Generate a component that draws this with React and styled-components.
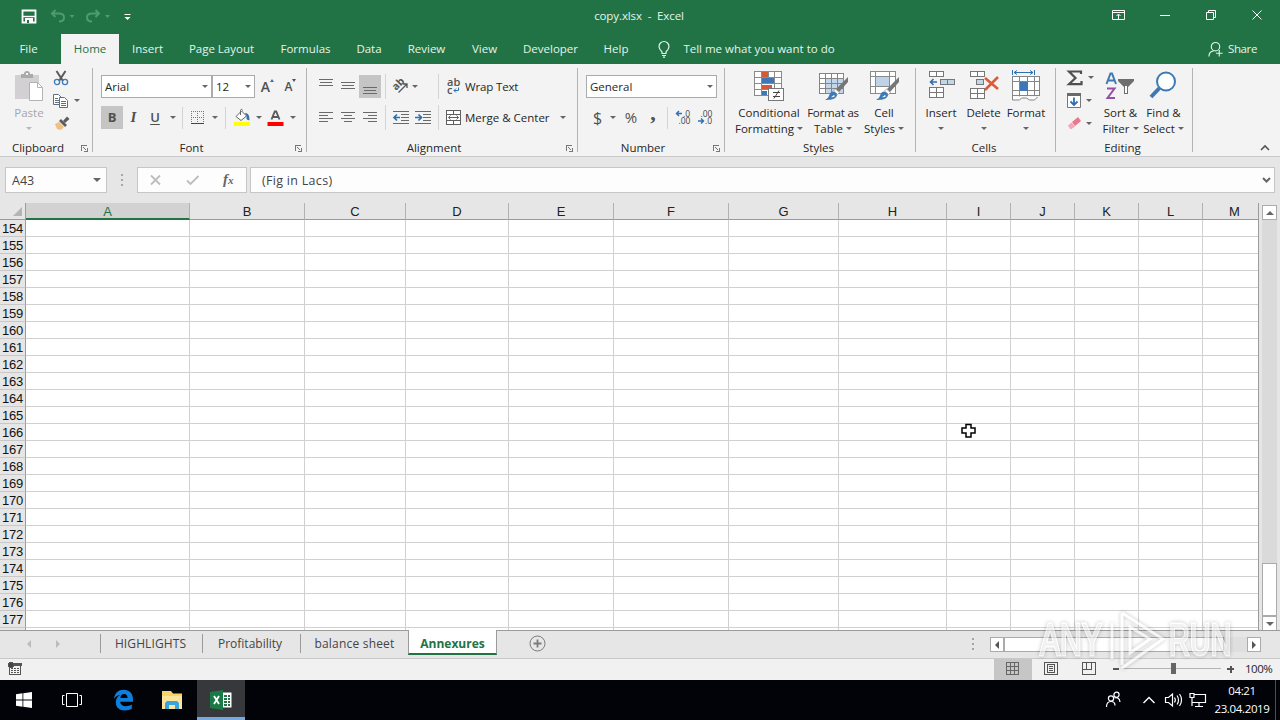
import React from "react";
import styled, { createGlobalStyle } from "styled-components";

const GlobalStyle = createGlobalStyle`
  * {
    box-sizing: border-box;
  }
  body {
    margin: 0;
    overflow: hidden;
    font-family: "Open Sans", "Noto Sans", sans-serif;
    font-size: 11.5px;
    color: #262626;
  }
  svg {
    display: block;
    flex: none;
    overflow: visible;
  }
`;

/* ---------- shared ---------- */

const Screen = styled.div`
  position: relative;
  display: flex;
  flex-direction: column;
  width: 1280px;
  height: 720px;
  overflow: hidden;
  background: #e6e6e6;
`;
const Cell = styled.div`
  display: flex;
  flex: none;
  align-items: center;
  justify-content: center;
  width: ${(p) => p.$w}px;
  height: ${(p) => (p.$h ? `${p.$h}px` : "100%")};
`;
const Spacer = styled.div`
  flex: ${(p) => (p.$w ? "none" : 1)};
  width: ${(p) => (p.$w ? `${p.$w}px` : "auto")};
`;
const Text = styled.span`
  white-space: pre;
  font-size: ${(p) => p.$size || 11.5}px;
  letter-spacing: ${(p) => p.$ls || 0}px;
`;
const CaretShape = styled.i`
  display: inline-block;
  flex: none;
  width: 0;
  height: 0;
  border: 3px solid transparent;
  border-top: 3px solid ${(p) => p.$color || "#666"};
  border-bottom: 0;
`;
const Caret = ({ w = 12, color }) => (
  <Cell $w={w}>
    <CaretShape $color={color} />
  </Cell>
);

/* ---------- title bar and tabs ---------- */

const TitleBar = styled.header`
  display: flex;
  flex: none;
  align-items: center;
  height: 34px;
  padding: 0 0 2px 20px;
  background: #217346;
  color: #e6f3eb;
`;
const FileName = styled.div`
  width: 100px;
  padding-bottom: 2px;
  text-align: center;
  white-space: pre;
  letter-spacing: -0.1px;
`;
const Tabs = styled.nav`
  display: flex;
  flex: none;
  height: 30px;
  background: #217346;
  color: #e6f3eb;
`;
const Tab = styled.div`
  display: flex;
  align-items: center;
  justify-content: center;
  width: ${(p) => p.$w}px;
  height: 30px;
  padding-bottom: 2px;
  letter-spacing: ${(p) => p.$ls || 0}px;
  white-space: nowrap;
  color: ${(p) => (p.$active ? "#217346" : "inherit")};
  background: ${(p) => (p.$active ? "#f3f3f3" : "transparent")};
`;

/* ---------- ribbon ---------- */

const RibbonBar = styled.section`
  display: flex;
  flex: none;
  height: 93px;
  padding-top: 4px;
  background: #f3f3f3;
  border-bottom: 1px solid #c9c9c9;
`;
const GroupBox = styled.div`
  display: flex;
  flex: none;
  flex-direction: column;
  width: ${(p) => p.$w}px;
`;
const GroupBody = styled.div`
  display: flex;
  height: 72px;
  padding-left: ${(p) => p.$pl || 0}px;
`;
const GroupLabel = styled.div`
  display: flex;
  align-items: center;
  height: 16px;
  padding-right: 1px;
`;
const GroupName = styled.div`
  flex: 1;
  padding: 0 2px 2px 0;
  text-align: center;
`;
const GroupLine = styled.div`
  flex: none;
  width: 1px;
  height: 84px;
  background: #b4b4b4;
`;
const Lines = styled.div`
  display: flex;
  flex-direction: column;
  gap: 8px;
  padding-top: 7px;
`;
const Line = styled.div`
  display: flex;
  align-items: center;
  height: 23px;
`;
const Stack = styled.div`
  display: flex;
  flex-direction: column;
  width: ${(p) => p.$w}px;
  margin-top: -2px;
`;
const StackLine = styled.div`
  display: flex;
  align-items: center;
  height: 23px;
`;
const Divider = styled.div`
  flex: none;
  width: 1px;
  height: ${(p) => p.$h || 22}px;
  margin: 0 3px;
  background: #d4d4d4;
`;
const Combo = styled.div`
  display: flex;
  align-items: center;
  justify-content: space-between;
  width: ${(p) => p.$w}px;
  height: 23px;
  padding-left: 3px;
  background: #fff;
  border: 1px solid #ababab;
`;
const Toggle = styled(Cell)`
  background: ${(p) => (p.$on ? "#c5c5c5" : "transparent")};
`;
const Glyph = styled.span`
  font-size: ${(p) => p.$size || 14}px;
  line-height: 1;
  font-weight: ${(p) => p.$weight || 700};
  font-style: ${(p) => (p.$italic ? "italic" : "normal")};
  font-family: ${(p) => (p.$serif ? '"Liberation Serif", serif' : "inherit")};
  text-decoration: ${(p) => (p.$under ? "underline" : "none")};
  text-underline-offset: 2px;
  padding-bottom: ${(p) => p.$raise || 0}px;
  color: #505050;
`;
const SizeMark = styled.i`
  align-self: flex-start;
  width: 0;
  height: 0;
  margin-top: 4px;
  border: 2.5px solid transparent;
  border-top: ${(p) => (p.$up ? 0 : "3px solid #505050")};
  border-bottom: ${(p) => (p.$up ? "3px solid #3f6fa5" : 0)};
`;
const BigButton = styled.div`
  display: flex;
  flex: none;
  flex-direction: column;
  align-items: center;
  width: ${(p) => p.$w}px;
  color: ${(p) => (p.$off ? "#a6a6a6" : "inherit")};
`;
const BigIcon = styled.div`
  display: flex;
  align-items: flex-start;
  height: 36px;
  padding-top: 3px;
`;
const BigLine = styled.div`
  display: flex;
  align-items: center;
  gap: 3px;
  height: 16px;
  white-space: nowrap;
  letter-spacing: ${(p) => p.$ls || 0}px;
`;

const Launcher = () => (
  <svg width="13" height="9" viewBox="0 0 13 9" fill="none" stroke="#777" shapeRendering="crispEdges">
    <path d="M3.5 7V1.5H9" />
    <path d="M5.5 3.5l3 3M9.5 4v4M6 7.5h4" />
  </svg>
);

function Group({ name, w, pl, launcher, children }) {
  return (
    <>
      <GroupBox $w={w}>
        <GroupBody $pl={pl}>{children}</GroupBody>
        <GroupLabel>
          <GroupName>{name}</GroupName>
          {launcher && <Launcher />}
        </GroupLabel>
      </GroupBox>
      <GroupLine />
    </>
  );
}

function Big({ w, icon, first, second, off, ls }) {
  return (
    <BigButton $w={w} $off={off}>
      <BigIcon>{icon}</BigIcon>
      <BigLine $ls={ls}>{first}</BigLine>
      <BigLine>
        {second}
        <CaretShape $color={off ? "#b8b8b8" : undefined} />
      </BigLine>
    </BigButton>
  );
}

/* ---------- icons ---------- */

const PasteIcon = () => (
  <svg width="28" height="31" viewBox="0 0 28 31">
    <path d="M0 4h24v24H0z" fill="#d3d0d3" />
    <path d="M6 3h3a3 3 0 0 1 6 0h3v4H6z" fill="#aaa" />
    <rect x="11" y="2" width="2" height="2" fill="#f3f3f3" />
    <path d="M14.500 11.500h8l5 5v13h-13z" fill="#fff" stroke="#b3b3b3" />
    <path d="M22.500 11.500v5h5" fill="none" stroke="#b3b3b3" />
  </svg>
);
const CutIcon = () => (
  <svg width="16" height="16" viewBox="0 0 16 16" fill="none">
    <path d="M3.5 1l6.5 10M12.500 1L6 11" stroke="#5a5a5a" strokeWidth="2" />
    <circle cx="4" cy="12" r="2.600" stroke="#3f7cb8" strokeWidth="1.300" />
    <circle cx="12" cy="12" r="2.600" stroke="#3f7cb8" strokeWidth="1.300" />
  </svg>
);
const CopyIcon = () => (
  <svg width="16" height="14" viewBox="0 0 16 14" fill="#fff" stroke="#5f6f80">
    <path d="M.5.5h5l3 3v7h-8z" />
    <path d="M2 4.500h3M2 6.500h4M2 8.500h4" />
    <path d="M6.500 3.500h5l3 3v7h-8z" />
    <path d="M8 7.500h5M8 9.500h5M8 11.500h5" />
  </svg>
);
const BrushIcon = () => (
  <svg width="16" height="15" viewBox="0 0 16 15">
    <path d="M1 8l4-2 5 5-3 3-4-1z" fill="#eec27c" />
    <path d="M5 5l2-2 6 6-2 2z" fill="#5c5c5c" />
    <path d="M9 5l4-4.500L15.500 3 11 7z" fill="#5c5c5c" />
  </svg>
);
const BordersIcon = () => (
  <svg width="14" height="14" viewBox="0 0 14 14" fill="none" stroke="#777" shapeRendering="crispEdges">
    <path d="M.5 0v13M6.500 0v13M12.500 0v13M0 .5h13M0 6.500h13" strokeDasharray="1 1" />
    <path d="M0 12.500h13" stroke="#444" />
  </svg>
);
const FillIcon = () => (
  <svg width="18" height="17" viewBox="0 0 18 17">
    <path d="M3 7.500L8.500 2l5 5L8 11.500z" fill="#fff" stroke="#666" />
    <path d="M7.500 6V1.500c0-1.500 2-1.500 2 0" fill="none" stroke="#666" />
    <path d="M12 4c3 0 4.500 2 4.500 7-1 .6-2.500 0-3-1.500L13.500 7z" fill="#3a6ea8" />
    <path d="M1 13h16v4H1z" fill="#ff0" />
  </svg>
);
const FontColorIcon = () => (
  <svg width="17" height="17" viewBox="0 0 17 17">
    <path d="M4.500 10.500L7.800 2.500h1.400l3.300 8M5.600 8h5.800" fill="none" stroke="#595959" strokeWidth="1.900" />
    <path d="M.5 13h16v4H.5z" fill="#f00" />
  </svg>
);
const Bars = ({ rows, top = 0 }) => (
  <svg width="14" height="17" viewBox="0 0 14 17" stroke="#6a6a6a" shapeRendering="crispEdges">
    {rows.map(([x, len], i) => (
      <path key={i} d={`M${x} ${top + i * 3 + 0.5}h${len}`} />
    ))}
  </svg>
);
const OrientIcon = () => (
  <svg width="18" height="17" viewBox="0 0 18 17" fill="none" stroke="#555">
    <text x="0" y="0" transform="translate(5 13) rotate(-45)" fontSize="10.500" fontWeight="700" fill="#555" stroke="none">
      ab
    </text>
    <path d="M7.500 14.500l8.500-8.500M12 6h4v4" strokeWidth="1.300" />
  </svg>
);
const IndentIcon = ({ right }) => (
  <svg width="16" height="14" viewBox="0 0 16 14" fill="none" stroke="#6a6a6a">
    <path d="M0 .5h16M8 3.500h8M8 6.500h8M8 9.500h8M0 12.500h16" shapeRendering="crispEdges" />
    <path d={right ? "M0 6.500h6M3.500 3.500l3 3-3 3" : "M1 6.500h6M4 3.500l-3 3 3 3"} stroke="#2f6fae" strokeWidth="1.700" />
  </svg>
);
const WrapIcon = () => (
  <svg width="14" height="17" viewBox="0 0 14 17">
    <text x="0" y="8" fontSize="11" fontWeight="600" fill="#555">
      ab
      <tspan x="0" y="16">c</tspan>
    </text>
    <path d="M11.500 9.500v3H7M9 10.500l-2 2 2 2" fill="none" stroke="#2f6fae" />
  </svg>
);
const MergeIcon = () => (
  <svg width="16" height="16" viewBox="0 0 16 16" fill="none" stroke="#5f5f5f">
    <path d="M.5.5h14v14H.5zM.5 4.500h14M.5 10.500h14M7.500 .5v4M7.500 10.500v4" fill="#fff" shapeRendering="crispEdges" />
    <path d="M2.500 7.500h10M4.500 5.500l-2 2 2 2M10.500 5.500l2 2-2 2" stroke="#2f6fae" />
  </svg>
);
const DecimalIcon = ({ more }) => (
  <svg width="16" height="15" viewBox="0 0 16 15" fontSize="8.500" fill="#444">
    <text x={more ? 8 : 3.5} y="6.500">
      {more ? ".0" : ".00"}
      <tspan x={more ? 3.5 : 8} y="14">{more ? ".00" : ".0"}</tspan>
    </text>
    <path d={more ? "M7 3.500H1.500M4 1L1.500 3.500 4 6" : "M1 11h5.500M4 8.500L6.500 11 4 13.500"} fill="none" stroke="#2f6fae" strokeWidth="1.400" />
  </svg>
);
const CondIcon = () => (
  <svg width="30" height="31" viewBox="0 0 30 31" fill="none" shapeRendering="crispEdges">
    <path d="M.5.500h27v24H.5z" fill="#fff" />
    <path d="M8 1h6v5H8zM8 14h10v5H8z" fill="#d45a35" />
    <path d="M8 7h12v6H8zM8 20h5v4H8z" fill="#3f76b5" />
    <path d="M.5.500h27v24H.5zM7.500 0v25M14.500 0v7M20.500 0v25M0 6.500h28M0 12.500h28M0 18.500h28" stroke="#8a8a8a" />
    <path d="M14.500 17.500h15v12h-15z" fill="#fff" stroke="#777" />
    <path d="M19 21.500h7M19 25.500h7" stroke="#444" />
    <path d="M25 19.500l-5 8" stroke="#444" shapeRendering="auto" />
  </svg>
);
const Brush = () => (
  <g transform="translate(0 1)">
    <path d="M29 5v5L20 20l-3-3z" fill="#767676" />
    <path d="M16.500 17l4 3.500-2 2-4-3.500z" fill="#fff" stroke="#888" strokeWidth=".7" />
    <path d="M13.500 19.500c3 .4 4.500 2 4.500 4-1.500 4-7 4.500-12 4.500 3-1.500 3.500-3 4.500-5.500.8-1.700 1.500-2.500 3-3z" fill="#3d7ab5" />
    <path d="M12 25c1-.2 2-1 2.500-2l1.500 1c-1 1-2 1.500-4 1z" fill="#fff" />
  </g>
);
const TableIcon = () => (
  <svg width="30" height="31" viewBox="-1 0 30 31">
    <g shapeRendering="crispEdges">
      <path d="M.5 2.500h24v20H.5z" fill="#fff" />
      <path d="M7 8h17v14H7z" fill="#c3d6eb" />
      <path d="M.5 2.500h24v20H.5zM6.500 2v20M12.500 2v20M18.500 2v20M0 7.500h25M0 12.500h25M0 17.500h25" fill="none" stroke="#858585" />
    </g>
    <Brush />
  </svg>
);
const CellStylesIcon = () => (
  <svg width="30" height="31" viewBox="-1 0 30 31">
    <g shapeRendering="crispEdges">
      <path d="M.5.500h25v22h-25z" fill="#fff" />
      <path d="M6 6h14v10H6z" fill="#bed3ea" />
      <path d="M.5.500h25v22h-25zM5.500 0v23M19.500 0v23M0 5.500h26M0 15.500h26" fill="none" stroke="#8a8a8a" />
    </g>
    <Brush />
  </svg>
);
const InsertIcon = () => (
  <svg width="28" height="31" viewBox="0 0 28 31" fill="#fff" stroke="#777" shapeRendering="crispEdges">
    <path d="M2.500.500h14v5h-14zM9.500 0v6" />
    <path d="M13.500 8.500h14v5h-14zM20.500 8v6" fill="#c3d6e4" />
    <path d="M2.500 16.500h14v10h-14zM2 21.500h15M9.500 16v11" />
    <path d="M10 11H4M6.500 8L3.500 11l3 3" fill="none" stroke="#2f6fae" strokeWidth="1.600" shapeRendering="auto" />
  </svg>
);
const DeleteIcon = () => (
  <svg width="28" height="31" viewBox="0 0 28 31" fill="#fff" stroke="#777">
    <g shapeRendering="crispEdges">
      <path d="M.5.500h14v5H.5zM7.500 0v6" />
      <path d="M6.500 8.500h7v5h-7z" fill="#c3d6e4" />
      <path d="M.5 17.500h14v10H.5zM0 22.500h15M7.500 17v11" />
    </g>
    <path d="M15 7l13 11M28 6L15 19" stroke="#dc5a3c" strokeWidth="2.600" />
  </svg>
);
const FormatIcon = () => (
  <svg width="30" height="32" viewBox="0 1 30 32">
    <path d="M1.500 0v5M23.500 0v5M3 2.500h19M6 .500l-3 2 3 2M19 .500l3 2-3 2" fill="none" stroke="#2f6fae" />
    <g shapeRendering="crispEdges">
      <path d="M1.500 6.500h27v19h-27z" fill="#fff" />
      <path d="M1.500 6.500h27v19h-27zM8.500 6v24M16.500 6v20M23.500 6v20M1 11.500h28M1 20.500h28" fill="none" stroke="#858585" />
      <path d="M9 12h8v9H9z" fill="#3d7ab5" />
    </g>
    <path d="M1.500 26v4h7l2-2h5l3 2h5l3-3" fill="#fff" stroke="#858585" />
  </svg>
);
const SigmaIcon = () => (
  <svg width="16" height="16" viewBox="0 0 16 16">
    <path d="M14 4V1.500H2L8.500 8 2 14.200h12.500V11" fill="none" stroke="#505050" strokeWidth="2.200" />
  </svg>
);
const FillDownIcon = () => (
  <svg width="14" height="15" viewBox="0 0 14 15">
    <path d="M.5.500h13v14H.5z" fill="#fff" stroke="#777" />
    <path d="M0 0h14v3H0z" fill="#6a6a6a" />
    <path d="M7 4.500V12M3.500 8.500L7 12l3.500-3.500" fill="none" stroke="#2f6fae" strokeWidth="1.800" />
  </svg>
);
const EraserIcon = () => (
  <svg width="15" height="13" viewBox="0 0 15 13">
    <path d="M5 5l6-5 3 4-6 5z" fill="#e8788e" />
    <path d="M1 8.500l3.500-3L8 9.500 4.500 12H3z" fill="#f3a6b3" />
  </svg>
);
const SortIcon = () => (
  <svg width="30" height="31" viewBox="1 -1 30 31">
    <path d="M1.500 12L5.500 1.500h1.500L11 12M3 8.500h6.500" fill="none" stroke="#3d7ab5" strokeWidth="2" />
    <path d="M2 16.500h7.500L2.500 26H10" fill="none" stroke="#9351a8" strokeWidth="2" />
    <path d="M13 7h16v2l-6 6v7h-4v-7l-6-6z" fill="#6e6e6e" />
    <path d="M20 14h2v7h-2z" fill="#fff" />
  </svg>
);
const FindIcon = () => (
  <svg width="30" height="31" viewBox="1 0 30 31" fill="none" stroke="#3d7ab5">
    <path d="M11.500 17L3 26" strokeWidth="4" />
    <circle cx="18" cy="10.500" r="9" fill="#fff" strokeWidth="2" />
  </svg>
);

/* ---------- formula bar ---------- */

const FormulaBar = styled.section`
  display: flex;
  flex: none;
  height: 46px;
  padding: 10px 5px 0;
`;
const Field = styled.div`
  display: flex;
  align-items: center;
  flex: ${(p) => (p.$w ? "none" : 1)};
  width: ${(p) => (p.$w ? `${p.$w}px` : "auto")};
  height: 26px;
  padding-left: ${(p) => p.$pl || 0}px;
  background: #fdfdfd;
  border: 1px solid #c6c6c6;
  color: #444;
`;
const Dots = ({ w }) => (
  <Cell $w={w} $h={26}>
    <svg width="2" height="12" viewBox="0 0 2 12" fill="#a5a5a5">
      <path d="M0 0h2v2H0zM0 5h2v2H0zM0 10h2v2H0z" />
    </svg>
  </Cell>
);

/* ---------- grid ---------- */

const columns = [
  ["A", 164], ["B", 115], ["C", 101], ["D", 103], ["E", 105], ["F", 115], ["G", 110],
  ["H", 108], ["I", 64], ["J", 64], ["K", 64], ["L", 64], ["M", 64],
];
const rows = Array.from({ length: 25 }, (_, i) => 154 + i);

const SheetArea = styled.main`
  display: flex;
  flex: none;
  height: 427px;
  font-family: "Liberation Sans", Arial, sans-serif;
  font-size: 13px;
`;
const Grid = styled.div`
  width: 1259px;
  overflow: hidden;
  border-right: 1px solid #9b9b9b;
`;
const HeadRow = styled.div`
  display: flex;
  width: 1300px;
  height: 17px;
`;
const Corner = styled.div`
  display: flex;
  align-items: flex-end;
  justify-content: flex-end;
  width: 26px;
  height: 17px;
  padding: 0 3px 3px 0;
  border-right: 1px solid #9b9b9b;
  border-bottom: 1px solid #9b9b9b;
`;
const ColHead = styled.div`
  width: ${(p) => p.$w}px;
  height: 17px;
  line-height: 17px;
  text-align: center;
  color: ${(p) => (p.$on ? "#217346" : "#222")};
  background: ${(p) => (p.$on ? "#d2d2d2" : "#e6e6e6")};
  border-right: 1px solid #b1b1b1;
  border-bottom: ${(p) => (p.$on ? "2px solid #217346" : "1px solid #9b9b9b")};
`;
const GridRow = styled.div`
  display: flex;
  width: 1300px;
  height: 17px;
`;
const RowHead = styled.div`
  width: 26px;
  height: 17px;
  padding-right: 2px;
  line-height: 17px;
  text-align: right;
  letter-spacing: -0.2px;
  color: #111;
  border-right: 1px solid #9b9b9b;
  border-bottom: 1px solid #c8c8c8;
`;
const GridCell = styled.div`
  width: ${(p) => p.$w}px;
  height: 17px;
  background: #fff;
  border-right: 1px solid #d0d0d0;
  border-bottom: 1px solid #d0d0d0;
`;
const VScroll = styled.div`
  display: flex;
  flex-direction: column;
  width: 15px;
  height: 426px;
  margin: 2px 0 0 3px;
  background: #dadada;
`;
const ScrollButton = styled.div`
  display: flex;
  flex: none;
  align-items: center;
  justify-content: center;
  width: ${(p) => p.$w || 15}px;
  height: 15px;
  background: #fff;
  border: 1px solid #ababab;
`;
const Arrow = styled.i`
  width: 0;
  height: 0;
  border: 4px solid transparent;
  ${(p) => p.$dir === "up" && "border-bottom-color: #666; border-top: 0;"}
  ${(p) => p.$dir === "down" && "border-top-color: #666; border-bottom: 0;"}
  ${(p) => p.$dir === "left" && `border-right-color: ${p.$color || "#555"}; border-left: 0;`}
  ${(p) => p.$dir === "right" && `border-left-color: ${p.$color || "#555"}; border-right: 0;`}
`;
const VThumb = styled.div`
  height: 53px;
  background: #fff;
  border: 1px solid #ababab;
`;
const CrossCursor = styled.svg`
  position: absolute;
  left: 961px;
  top: 423px;
`;

/* ---------- sheet tabs ---------- */

const SheetTabs = styled.footer`
  display: flex;
  flex: none;
  height: 28px;
  border-top: 1px solid #9b9b9b;
  font-size: 12px;
  color: #444;
`;
const SheetTab = styled.div`
  display: flex;
  align-items: center;
  justify-content: center;
  width: ${(p) => p.$w}px;
  height: 25px;
  padding-right: ${(p) => p.$pr || 0}px;
  letter-spacing: ${(p) => p.$ls || 0}px;
`;
const TabLine = styled.div`
  width: 1px;
  height: 19px;
  margin-top: 3px;
  background: #9a9a9a;
`;
const ActiveTab = styled(SheetTab)`
  padding-top: 3px;
  margin-top: -1px;
  color: #217346;
  font-weight: 700;
  background: #fff;
  border-right: 1px solid #9b9b9b;
  border-left: 1px solid #9b9b9b;
  border-bottom: 2px solid #217346;
`;
const HScroll = styled.div`
  display: flex;
  width: 271px;
  height: 15px;
  margin-top: 6px;
  background: #dfdfdf;
`;
const HThumb = styled.div`
  width: 220px;
  height: 15px;
  background: #fff;
  border: 1px solid #ababab;
`;

/* ---------- status bar ---------- */

const StatusBar = styled.footer`
  display: flex;
  flex: none;
  align-items: center;
  height: 22px;
  padding: 0 0 2px 8px;
  background: #f1f1f1;
  border-top: 1px solid #c9c9c9;
`;
const ViewButton = styled.div`
  display: flex;
  align-items: center;
  justify-content: center;
  width: 38px;
  height: 21px;
  margin-bottom: -2px;
  padding-bottom: 2px;
  background: ${(p) => (p.$on ? "#c6c6c6" : "transparent")};
`;
const ZoomText = styled.span`
  width: 35px;
  margin-left: 11px;
  letter-spacing: -0.5px;
`;

/* ---------- taskbar ---------- */

const TaskBar = styled.footer`
  display: flex;
  flex: none;
  align-items: center;
  height: 40px;
  background: #010308;
  color: #fff;
`;
const RunningApp = styled.div`
  display: flex;
  align-items: center;
  justify-content: center;
  width: 48px;
  height: 40px;
  background: #36383c;
  border-bottom: 3px solid #76a9de;
  padding-top: 3px;
`;
const Clock = styled.div`
  width: 60px;
  margin-left: 4px;
  padding-bottom: 1px;
  font-size: 11.5px;
  line-height: 18px;
  text-align: center;
  letter-spacing: -0.35px;
`;
const Peek = styled.div`
  width: 1px;
  height: 40px;
  margin-left: 3px;
  background: #4b4d50;
`;

/* ---------- watermark ---------- */

const Watermark = styled.div`
  position: absolute;
  left: 1040px;
  top: 608px;
  display: flex;
  align-items: center;
  height: 64px;
  opacity: 0.6;
  filter: drop-shadow(0 0 2px rgba(0, 0, 0, 0.4));
`;
const Outlined = styled.span`
  width: ${(p) => p.$w}px;
  font-family: "Liberation Sans", Arial, sans-serif;
  font-size: 45px;
  line-height: 64px;
  transform: scaleX(${(p) => p.$sx});
  transform-origin: left;
  color: #e9e9e9;
  paint-order: stroke fill;
  -webkit-text-stroke: 3px #fff;
`;

/* ---------- sections ---------- */

function Title() {
  return (
    <TitleBar>
      <svg width="112" height="18" viewBox="0 0 112 18" fill="none" stroke="#fff">
        <path d="M2.500 3.500h13v12h-13z" strokeWidth="1.800" />
        <path d="M3 9.500h12" strokeWidth="1.400" />
        <path d="M5 11h8v5H5z" fill="#fff" stroke="none" />
        <path d="M7 13h2v3H7z" fill="#217346" stroke="none" />
        <g stroke="#4f9a72" strokeWidth="2">
          <path d="M35.500 3L32 6.500l3.500 3.500M32 6.500h7c3 0 5 1.500 5 4s-2 4-5 4" />
          <path d="M75.500 3L79 6.500 75.500 10M79 6.500h-7c-3 0-5 1.500-5 4s2 4 5 4" />
        </g>
        <path d="M49.500 8h5l-2.500 3zM85 8h5l-2.500 3z" fill="#4f9a72" stroke="none" />
        <path d="M104.500 7.500h6" />
        <path d="M104.500 10h6l-3 3z" fill="#fff" stroke="none" />
      </svg>
      <Spacer $w={457} />
      <FileName>copy.xlsx  -  Excel</FileName>
      <Spacer />
      <svg width="154" height="14" viewBox="0 1 154 14" fill="none" stroke="#fff">
        <path d="M.5 2.500h12v9H.5zM.5 4.500h12M6.500 11V6.500M4.500 8l2-2 2 2" />
        <path d="M48 7.500h10" />
        <path d="M94.500 4.500h7v7h-7zM96.500 4.500v-2h7v7h-2" />
        <path d="M140.500 2.500l9 9M149.500 2.500l-9 9" />
      </svg>
      <Spacer $w={14} />
    </TitleBar>
  );
}

const tabs = [
  ["Home", 58], ["Insert", 57], ["Page Layout", 91], ["Formulas", 77], ["Data", 50],
  ["Review", 65], ["View", 51], ["Developer", 81], ["Help", 50],
];

function TabRow() {
  return (
    <Tabs>
      <Tab $w={57}>File</Tab>
      <Spacer $w={4} />
      {tabs.map(([name, w], i) => (
        <Tab key={name} $w={w} $active={i === 0}>
          {name}
        </Tab>
      ))}
      <Spacer $w={13} />
      <Cell $w={20}>
        <svg width="12" height="17" viewBox="0 0 12 17" fill="none" stroke="#e6f3eb" strokeWidth="1.200">
          <path d="M4 12.500V11C2 9 1 7.500 1 5.500a5 5 0 0 1 10 0C11 7.500 10 9 8 11v1.500zM4 14.500h4M5 16.200h2" />
        </svg>
      </Cell>
      <Tab $w={170}>Tell me what you want to do</Tab>
      <Spacer />
      <Cell $w={16}>
        <svg width="15" height="17" viewBox="0 0 16 17" fill="none" stroke="#e6f3eb" strokeWidth="1.200">
          <circle cx="8" cy="5.500" r="4.500" />
          <path d="M1 16c0-3.500 2-5.500 5-6M12 9v7M8.500 12.500h7" />
        </svg>
      </Cell>
      <Spacer $w={3} />
      <Tab $w={33} $ls={-0.4}>Share</Tab>
      <Spacer $w={21} />
    </Tabs>
  );
}

function Ribbon() {
  return (
    <RibbonBar>
      <Group name="Clipboard" w={92} pl={8} launcher>
        <Big w={42} icon={<PasteIcon />} first="Paste" off />
        <Stack $w={40}>
          <StackLine>
            <Cell $w={22}><CutIcon /></Cell>
          </StackLine>
          <StackLine>
            <Cell $w={21}><CopyIcon /></Cell>
            <Caret />
          </StackLine>
          <StackLine>
            <Cell $w={23}><BrushIcon /></Cell>
          </StackLine>
        </Stack>
      </Group>
      <Group name="Font" w={213} pl={8} launcher>
        <Lines>
          <Line>
            <Combo $w={111}>
              <Text>Arial</Text>
              <Caret />
            </Combo>
            <Combo $w={43}>
              <Text>12</Text>
              <Caret />
            </Combo>
            <Spacer $w={1} />
            <Cell $w={23}>
              <Glyph $size={14} $weight={600}>A</Glyph>
              <SizeMark $up />
            </Cell>
            <Cell $w={23}>
              <Glyph $size={12} $weight={600}>A</Glyph>
              <SizeMark />
            </Cell>
          </Line>
          <Line>
            <Toggle $w={22} $on><Glyph $size={13}>B</Glyph></Toggle>
            <Cell $w={21}><Glyph $size={15} $italic $serif>I</Glyph></Cell>
            <Cell $w={22}><Glyph $size={13} $weight={600} $under>U</Glyph></Cell>
            <Caret w={13} />
            <Divider />
            <Cell $w={24}><BordersIcon /></Cell>
            <Caret w={10} />
            <Spacer $w={2} />
            <Divider />
            <Cell $w={26}><FillIcon /></Cell>
            <Caret w={7} />
            <Cell $w={27}><FontColorIcon /></Cell>
            <Caret w={8} />
          </Line>
        </Lines>
      </Group>
      <Group name="Alignment" w={270} pl={8} launcher>
        <Lines>
          <Line>
            <Toggle $w={22}><Bars top={1} rows={[[0, 14], [1, 12], [0, 14]]} /></Toggle>
            <Toggle $w={22}><Bars top={4} rows={[[0, 14], [1, 12], [0, 14]]} /></Toggle>
            <Toggle $w={22} $on><Bars top={9} rows={[[0, 14], [1, 12], [0, 14]]} /></Toggle>
            <Spacer $w={1} />
            <Divider $h={25} />
            <Cell $w={22}><OrientIcon /></Cell>
            <Caret w={8} />
            <Spacer $w={16} />
            <Divider $h={25} />
            <Cell $w={23}><WrapIcon /></Cell>
            <Text $ls={-0.15}>Wrap Text</Text>
          </Line>
          <Line>
            <Toggle $w={22}><Bars top={3} rows={[[0, 14], [0, 9], [0, 14], [0, 9]]} /></Toggle>
            <Toggle $w={22}><Bars top={3} rows={[[0, 14], [3, 8], [0, 14], [3, 8]]} /></Toggle>
            <Toggle $w={22}><Bars top={3} rows={[[0, 14], [5, 9], [0, 14], [5, 9]]} /></Toggle>
            <Spacer $w={1} />
            <Divider $h={25} />
            <Cell $w={24}><IndentIcon /></Cell>
            <Cell $w={20}><IndentIcon right /></Cell>
            <Spacer $w={2} />
            <Divider $h={25} />
            <Cell $w={23}><MergeIcon /></Cell>
            <Text>Merge & Center</Text>
            <Spacer $w={7} />
            <Caret />
          </Line>
        </Lines>
      </Group>
      <Group name="Number" w={146} pl={8} launcher>
        <Lines>
          <Line>
            <Combo $w={131}>
              <Text>General</Text>
              <Caret />
            </Combo>
          </Line>
          <Line>
            <Cell $w={23}><Glyph $size={16} $weight={400}>$</Glyph></Cell>
            <Caret w={8} />
            <Cell $w={28}><Glyph $size={15} $weight={400}>%</Glyph></Cell>
            <Cell $w={16}><Glyph $size={22} $serif $raise={10}>,</Glyph></Cell>
            <Spacer $w={3} />
            <Divider />
            <Cell $w={24}><DecimalIcon more /></Cell>
            <Cell $w={20}><DecimalIcon /></Cell>
          </Line>
        </Lines>
      </Group>
      <Group name="Styles" w={190} pl={9}>
        <Big w={70} icon={<CondIcon />} first="Conditional" second="Formatting" />
        <Big w={58} icon={<TableIcon />} first="Format as" second="Table" ls={-0.2} />
        <Big w={44} icon={<CellStylesIcon />} first="Cell" second="Styles" />
      </Group>
      <Group name="Cells" w={139} pl={4}>
        <Big w={42} icon={<InsertIcon />} first="Insert" />
        <Big w={43} icon={<DeleteIcon />} first="Delete" ls={-0.1} />
        <Big w={42} icon={<FormatIcon />} first="Format" />
      </Group>
      <Group name="Editing" w={136} pl={8}>
        <Stack $w={35}>
          <StackLine>
            <Cell $w={21}><SigmaIcon /></Cell>
            <Caret />
          </StackLine>
          <StackLine>
            <Cell $w={20}><FillDownIcon /></Cell>
            <Caret w={10} />
          </StackLine>
          <StackLine>
            <Cell $w={20}><EraserIcon /></Cell>
            <Caret w={10} />
          </StackLine>
        </Stack>
        <Big w={43} icon={<SortIcon />} first="Sort &" second="Filter" />
        <Big w={43} icon={<FindIcon />} first="Find &" second="Select" />
      </Group>
      <Spacer />
      <Cell $w={30}>
        <svg width="10" height="76" viewBox="0 0 10 76" fill="none" stroke="#555" strokeWidth="1.600">
          <path d="M1 76l4-4 4 4" />
        </svg>
      </Cell>
    </RibbonBar>
  );
}

function Formula() {
  return (
    <FormulaBar>
      <Field $w={102} $pl={6}>
        <Text $size={12.5}>A43</Text>
        <Spacer />
        <Arrow $dir="down" />
        <Spacer $w={5} />
      </Field>
      <Dots w={30} />
      <Field $w={110}>
        <svg width="108" height="16" viewBox="0 0 108 16" fill="none" stroke="#bdbdbd" strokeWidth="1.800">
          <path d="M13 3.500l9 9M22 3.500l-9 9M49 8.500l3.500 3.500 8-8" />
          <text x="85" y="12" fontFamily="Liberation Serif, serif" fontStyle="italic" fontWeight="700" fontSize="15" fill="#666" stroke="none">
            f
            <tspan fontSize="11">x</tspan>
          </text>
        </svg>
      </Field>
      <Spacer $w={3} />
      <Field $pl={11}>
        <Text $size={12.5} $ls={0.3}>(Fig in Lacs)</Text>
        <Spacer />
        <svg width="15" height="8" viewBox="0 0 15 8" fill="none" stroke="#666" strokeWidth="2">
          <path d="M4 2l3.500 3.500L11 2" />
        </svg>
      </Field>
    </FormulaBar>
  );
}

function Sheet() {
  return (
    <SheetArea>
      <Grid>
        <HeadRow>
          <Corner>
            <svg width="9" height="9" viewBox="0 0 9 9">
              <path d="M9 0v9H0z" fill="#b4b4b4" />
            </svg>
          </Corner>
          {columns.map(([name, w]) => (
            <ColHead key={name} $w={w} $on={name === "A"}>
              {name}
            </ColHead>
          ))}
        </HeadRow>
        {rows.map((row) => (
          <GridRow key={row}>
            <RowHead>{row < 178 ? row : ""}</RowHead>
            {columns.map(([name, w]) => (
              <GridCell key={name} $w={w} />
            ))}
          </GridRow>
        ))}
      </Grid>
      <VScroll>
        <ScrollButton><Arrow $dir="up" /></ScrollButton>
        <Spacer />
        <VThumb />
        <ScrollButton><Arrow $dir="down" /></ScrollButton>
      </VScroll>
    </SheetArea>
  );
}

function BottomTabs() {
  return (
    <SheetTabs>
      <Spacer $w={26} />
      <Cell $w={6} $h={25}><Arrow $dir="left" $color="#bbb" /></Cell>
      <Spacer $w={23} />
      <Cell $w={6} $h={25}><Arrow $dir="right" $color="#bbb" /></Cell>
      <Spacer $w={39} />
      <TabLine />
      <SheetTab $w={101} $pr={2} $ls={0.1}>HIGHLIGHTS</SheetTab>
      <TabLine />
      <SheetTab $w={97} $pr={3}>Profitability</SheetTab>
      <TabLine />
      <SheetTab $w={107} $ls={0.2}>balance sheet</SheetTab>
      <ActiveTab $w={89}>Annexures</ActiveTab>
      <Spacer $w={32} />
      <Cell $w={17} $h={25}>
        <svg width="17" height="17" viewBox="0 0 17 17" fill="none" stroke="#7a7a7a">
          <circle cx="8.500" cy="8.500" r="7.500" />
          <path d="M8.500 4.500v8M4.500 8.500h8" strokeWidth="1.800" />
        </svg>
      </Cell>
      <Spacer />
      <Dots w={16} />
      <Spacer $w={9} />
      <HScroll>
        <ScrollButton $w={14}><Arrow $dir="left" /></ScrollButton>
        <HThumb />
        <Spacer />
        <ScrollButton $w={14}><Arrow $dir="right" /></ScrollButton>
      </HScroll>
      <Spacer $w={19} />
    </SheetTabs>
  );
}

function Status() {
  return (
    <StatusBar>
      <svg width="14" height="14" viewBox="0 0 14 14" fill="none" stroke="#555" shapeRendering="crispEdges">
        <path d="M6 1h7v2H6z" fill="#555" />
        <circle cx="3" cy="3" r="2.500" fill="#444" />
        <path d="M1.500 6v6.500h11V3" />
        <path d="M3 6.500h9M3 8.500h9M3 10.500h9" strokeDasharray="2 1" />
      </svg>
      <Spacer />
      <ViewButton $on>
        <svg width="14" height="13" viewBox="0 0 14 13" fill="none" stroke="#666" shapeRendering="crispEdges">
          <path d="M.5.500h12v12H.5zM4.500 0v13M8.500 0v13M0 4.500h13M0 8.500h13" />
        </svg>
      </ViewButton>
      <ViewButton>
        <svg width="14" height="13" viewBox="0 0 14 13" fill="none" stroke="#555" shapeRendering="crispEdges">
          <path d="M.5.500h13v12H.5zM3.500 2.500h7v8h-7zM5 4.500h4M5 6.500h4M5 8.500h4" />
        </svg>
      </ViewButton>
      <ViewButton>
        <svg width="14" height="13" viewBox="0 0 14 13" fill="none" stroke="#555" shapeRendering="crispEdges">
          <path d="M.5.500h13v12H.5zM4.500 1v6M9.500 1v6M1 7.500h9" />
        </svg>
      </ViewButton>
      <Spacer $w={5} />
      <svg width="121" height="13" viewBox="0 0 121 13" fill="none" stroke="#555" shapeRendering="crispEdges">
        <path d="M10 6.500h98" stroke="#b5b5b5" />
        <path d="M0 7h6M114 7h7M117.500 3.500v7" strokeWidth="2" />
        <path d="M58 1h5v11h-5z" fill="#666" stroke="none" />
      </svg>
      <ZoomText>100%</ZoomText>
    </StatusBar>
  );
}

function WindowsTaskbar() {
  return (
    <TaskBar>
      <Cell $w={48}>
        <svg width="16" height="16" viewBox="0 0 16 16" fill="#fff">
          <path d="M0 2.300L6.500 1.300v6.200H0zM7.300 1.200L16 0v7.500H7.300zM0 8.400h6.500v6.300L0 13.700zM7.300 8.400H16V16l-8.700-1.200z" />
        </svg>
      </Cell>
      <Cell $w={48}>
        <svg width="20" height="16" viewBox="0 0 20 16" fill="none" stroke="#fff">
          <path d="M4.500 1.500h11v13h-11zM2.500 3.500h-2v9h2M17.500 3.500h2v9h-2" />
        </svg>
      </Cell>
      <Cell $w={54}>
        <svg width="21" height="22" viewBox="0 0 21 22">
          <path
            d="M1 9.800C1.800 4 5.500.800 10.700.800c5.700 0 9.300 3.700 9.300 9.700v2.300H7.200c.2 3 2.500 4.400 5.600 4.400 2.300 0 4.200-.6 6-1.700v4.300c-2 1.200-4.300 1.700-7 1.700-5.500 0-9-3-9-8.200 0-3.300 1.700-6 4.700-7.500C5 6.400 2.700 7.400 1 9.800zM7.300 9h7.200c0-2.600-1.200-4-3.500-4C8.900 5 7.700 6.600 7.300 9z"
            fill="#0f7fdc"
          />
        </svg>
      </Cell>
      <Cell $w={44}>
        <svg width="22" height="19" viewBox="0 0 22 19">
          <path d="M1 0h9l2 2.500h9V18H1z" fill="#f7d568" />
          <path d="M1 5h20v13H1z" fill="#fce59a" />
          <path d="M4 18v-6l2-2h10l2 2v6h-4v-4H8v4z" fill="#39a5dc" />
        </svg>
      </Cell>
      <Spacer $w={3} />
      <RunningApp>
        <svg width="22" height="20" viewBox="0 0 22 20">
          <path d="M11 2.500h10.500v15H11z" fill="#fff" />
          <path d="M14 5h3v2h-3zM18 5h2v2h-2zM14 8h3v2h-3zM18 8h2v2h-2zM14 11h3v2h-3zM18 11h2v2h-2zM14 14h3v2h-3zM18 14h2v2h-2z" fill="#217346" />
          <path d="M0 2l13-2v20L0 18z" fill="#1a7a45" />
          <path d="M4 6l5 8M9 6l-5 8" stroke="#fff" strokeWidth="1.800" />
        </svg>
      </RunningApp>
      <Spacer />
      <svg width="102" height="18" viewBox="1 0 102 18" fill="none" stroke="#fff" strokeWidth="1.200">
        <circle cx="6" cy="7.500" r="2.600" />
        <path d="M1.500 16c0-3.500 1.500-5.500 4.500-5.500s4 2 4 4" />
        <circle cx="11.500" cy="3.800" r="2.600" />
        <path d="M9.500 7c3-1 5 .5 5.500 4" />
        <path d="M38.500 12l5.500-5.500 5.500 5.500" strokeWidth="1.400" />
        <path d="M60.500 6.500h3l4-3.500v12l-4-3.500h-3zM69.500 6.500c1 1.500 1 3.500 0 5M72 4.500c2 2.500 2 6.500 0 9M74.500 3c2.700 3.500 2.700 8.500 0 12" />
        <path d="M88.500 3.500h12v8H87M94 12v3M90 15.500h8M85 2.500h4v4h-4zM87 7v8" />
      </svg>
      <Clock>
        04:21
        <br />
        23.04.2019
      </Clock>
      <Peek />
      <Spacer $w={4} />
    </TaskBar>
  );
}

export default function App() {
  return (
    <Screen>
      <GlobalStyle />
      <Title />
      <TabRow />
      <Ribbon />
      <Formula />
      <Sheet />
      <BottomTabs />
      <Status />
      <WindowsTaskbar />
      <CrossCursor width="16" height="16" viewBox="0 0 16 16">
        <path d="M5 1.500h5V5h4v5h-4v4H5v-4H1V5h4z" fill="#fff" stroke="#000" strokeWidth="1.500" />
      </CrossCursor>
      <Watermark>
        <Outlined $w={69} $sx={0.67}>ANY</Outlined>
        <svg width="60" height="64" viewBox="0 0 60 64" fill="none" stroke="#fff" strokeWidth="3">
          <path d="M3 15v36M13 5v52M13 5l41 26-41 29M21 19l20 12-20 14z" />
        </svg>
        <Outlined $w={66} $sx={0.64}>RUN</Outlined>
      </Watermark>
    </Screen>
  );
}
